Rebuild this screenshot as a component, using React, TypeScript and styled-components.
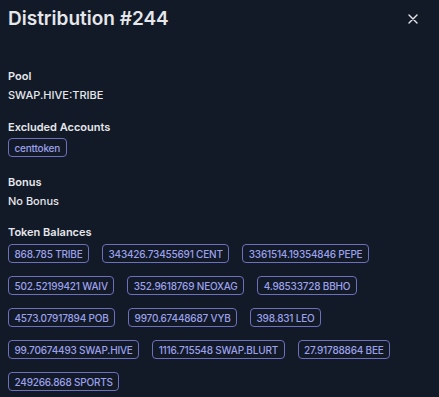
import React from "react";
import styled, { createGlobalStyle } from "styled-components";

const Global = createGlobalStyle`
  html, body { margin: 0; padding: 0; background: #121927; }
  body { font-family: Inter, "Noto Sans", sans-serif; -webkit-font-smoothing: antialiased; }
`;

const Panel = styled.div`
  width: 439px;
  height: 397px;
  box-sizing: border-box;
  padding: 0 8px;
  background: #121927;
  color: #e5e7eb;
  overflow: hidden;
`;

const Header = styled.div`
  display: flex;
  align-items: center;
  justify-content: space-between;
  height: 38px;
`;

const Title = styled.h2`
  margin: 0;
  font-size: 19px;
  font-weight: 600;
  line-height: 24px;
  color: #e5e7eb;
`;

const CloseButton = styled.button`
  display: flex;
  align-items: center;
  justify-content: center;
  width: 20px;
  height: 20px;
  margin-right: 8px;
  padding: 0;
  border: none;
  background: transparent;
  color: #e5e7eb;
  cursor: pointer;
`;

const Body = styled.div`
  display: flex;
  flex-direction: column;
  padding-top: 29px;
`;

const Section = styled.section<{ $gap?: number }>`
  display: flex;
  flex-direction: column;
  margin-top: ${(p) => p.$gap ?? 0}px;
`;

const Label = styled.div`
  font-size: 11px;
  font-weight: 600;
  line-height: 18px;
  color: #e5e7eb;
`;

const Value = styled.div`
  font-size: 11px;
  font-weight: 500;
  line-height: 18px;
  margin-top: 1px;
  color: #e5e7eb;
`;

const BadgeList = styled.div<{ $top?: number }>`
  display: flex;
  flex-wrap: wrap;
  gap: 13px;
  margin-top: ${(p) => p.$top ?? 2}px;
`;

const Badge = styled.span`
  display: inline-flex;
  align-items: center;
  height: 19px;
  box-sizing: border-box;
  padding: 0 5.5px;
  border: 1px solid #6c70bd;
  border-radius: 4px;
  font-size: 10px;
  font-weight: 500;
  letter-spacing: -0.2px;
  color: #9ca1ec;
  white-space: nowrap;
`;

const balances = [
  "868.785 TRIBE",
  "343426.73455691 CENT",
  "3361514.19354846 PEPE",
  "502.52199421 WAIV",
  "352.9618769 NEOXAG",
  "4.98533728 BBHO",
  "4573.07917894 POB",
  "9970.67448687 VYB",
  "398.831 LEO",
  "99.70674493 SWAP.HIVE",
  "1116.715548 SWAP.BLURT",
  "27.91788864 BEE",
  "249266.868 SPORTS",
];

export default function App() {
  return (
    <>
      <Global />
      <Panel>
        <Header>
          <Title>Distribution #244</Title>
          <CloseButton aria-label="Close">
            <svg width="10" height="10" viewBox="0 0 10 10">
              <path d="M1 1L9 9M9 1L1 9" stroke="currentColor" strokeWidth="1.4" strokeLinecap="round" />
            </svg>
          </CloseButton>
        </Header>
        <Body>
          <Section>
            <Label>Pool</Label>
            <Value>SWAP.HIVE:TRIBE</Value>
          </Section>
          <Section $gap={14}>
            <Label>Excluded Accounts</Label>
            <BadgeList>
              <Badge>centtoken</Badge>
            </BadgeList>
          </Section>
          <Section $gap={16}>
            <Label>Bonus</Label>
            <Value>No Bonus</Value>
          </Section>
          <Section $gap={13}>
            <Label>Token Balances</Label>
            <BadgeList $top={3}>
              {balances.map((b) => (
                <Badge key={b}>{b}</Badge>
              ))}
            </BadgeList>
          </Section>
        </Body>
      </Panel>
    </>
  );
}
